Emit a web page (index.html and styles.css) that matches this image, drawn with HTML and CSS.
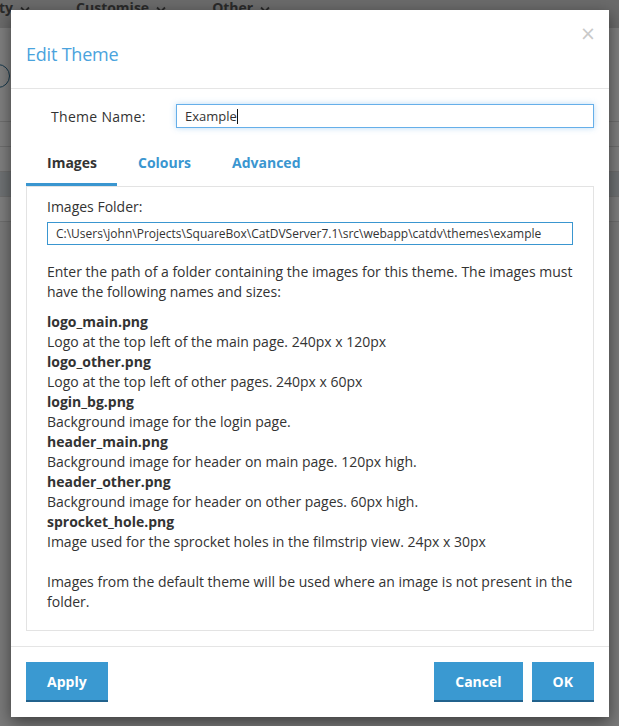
FILE: index.html
```html
<!DOCTYPE html>
<html>
<head>
<meta charset="utf-8">
<link rel="stylesheet" href="styles.css">
</head>
<body>
<div class="page">
  <div class="topnav">
    <span class="nav-item first">ty<svg class="chev" width="10" height="7" viewBox="0 0 10 7"><path d="M1 1.5 L5 5.5 L9 1.5" fill="none" stroke="currentColor" stroke-width="1.8"/></svg></span>
    <span class="nav-item">Customise<svg class="chev" width="10" height="7" viewBox="0 0 10 7"><path d="M1 1.5 L5 5.5 L9 1.5" fill="none" stroke="currentColor" stroke-width="1.8"/></svg></span>
    <span class="nav-item">Other<svg class="chev" width="10" height="7" viewBox="0 0 10 7"><path d="M1 1.5 L5 5.5 L9 1.5" fill="none" stroke="currentColor" stroke-width="1.8"/></svg></span>
  </div>
  <div class="subbar"><span class="pill"></span></div>
  <div class="rows">
    <div class="row"></div>
    <div class="row"></div>
    <div class="row sel"></div>
    <div class="row"></div>
  </div>
</div>
<div class="overlay"></div>
<div class="modal">
  <div class="modal-header">
    <h4 class="modal-title">Edit Theme</h4>
    <span class="close">&times;</span>
  </div>
  <div class="modal-body">
    <div class="form-row">
      <label class="form-label">Theme Name:</label>
      <div class="name-input">Example<span class="caret"></span></div>
    </div>
    <ul class="tabs">
      <li class="tab active">Images</li>
      <li class="tab">Colours</li>
      <li class="tab">Advanced</li>
    </ul>
    <div class="tab-panel">
      <div class="field-label">Images Folder:</div>
      <div class="folder-input">C:\Users\john\Projects\SquareBox\CatDVServer7.1\src\webapp\catdv\themes\example</div>
      <p class="intro">Enter the path of a folder containing the images for this theme. The images must have the following names and sizes:</p>
      <dl class="files">
        <dt>logo_main.png</dt><dd>Logo at the top left of the main page. 240px x 120px</dd>
        <dt>logo_other.png</dt><dd>Logo at the top left of other pages. 240px x 60px</dd>
        <dt>login_bg.png</dt><dd>Background image for the login page.</dd>
        <dt>header_main.png</dt><dd>Background image for header on main page. 120px high.</dd>
        <dt>header_other.png</dt><dd>Background image for header on other pages. 60px high.</dd>
        <dt>sprocket_hole.png</dt><dd>Image used for the sprocket holes in the filmstrip view. 24px x 30px</dd>
      </dl>
      <p class="note">Images from the default theme will be used where an image is not present in the folder.</p>
    </div>
  </div>
  <div class="modal-footer">
    <button class="btn">Apply</button>
    <div class="right-btns">
      <button class="btn">Cancel</button>
      <button class="btn">OK</button>
    </div>
  </div>
</div>
</body>
</html>
```
FILE: styles.css
```css
html, body {
  margin: 0;
  padding: 0;
}
body {
  width: 619px;
  height: 726px;
  overflow: hidden;
  font-family: "Open Sans", "Noto Sans", sans-serif;
  background: #f4f4f4;
  position: relative;
}
.page {
  height: 726px;
}
.topnav {
  height: 28px;
  box-sizing: border-box;
  background: #d6d6d6;
  display: flex;
  align-items: flex-start;
  padding-top: 0;
  font-weight: 700;
  font-size: 14px;
  color: #555;
  line-height: 18px;
  overflow: hidden;
}
.nav-item {
  display: flex;
  align-items: center;
  margin-right: 46px;
  white-space: nowrap;
  margin-top: -1px;
}
.nav-item.first {
  margin-left: -1px;
}
.chev {
  display: block;
  margin-left: 7px;
  margin-top: 2px;
}
.subbar {
  height: 93px;
  background: #fff;
  border-bottom: 1px solid #ddd;
  position: relative;
  overflow: hidden;
}
.pill {
  display: block;
  margin-top: 36px;
  margin-left: -60px;
  width: 68px;
  height: 22px;
  border: 1px solid #2c6f96;
  border-radius: 12px;
}
.rows .row {
  height: 24px;
  border-bottom: 1px solid #ddd;
  background: #fff;
}
.rows .row.sel {
  background: #dfe5e9;
}
.overlay {
  position: absolute;
  inset: 0;
  background: rgba(0, 0, 0, 0.5);
}
.modal {
  position: absolute;
  top: 10px;
  left: 11px;
  width: 598px;
  background: #fff;
  box-shadow: 0 5px 15px rgba(0, 0, 0, 0.5);
  color: #333;
}
.modal-header {
  position: relative;
  padding: 30px 15px 20px 15px;
  border-bottom: 1px solid #e5e5e5;
}
.modal-title {
  margin: 0;
  font-size: 18px;
  font-weight: 400;
  line-height: 28px;
  color: #4aa3dd;
  letter-spacing: -0.2px;
}
.close {
  position: absolute;
  top: 13px;
  right: 13px;
  font-size: 19px;
  line-height: 20px;
  color: #c9c9c9;
  font-family: "DejaVu Sans", sans-serif;
}
.modal-body {
  padding: 15px 15px 15px 15px;
}
.form-row {
  display: flex;
  align-items: center;
  height: 24px;
}
.form-label {
  width: 150px;
  padding-left: 25px;
  box-sizing: border-box;
  font-size: 14px;
  color: #333;
  letter-spacing: 0.3px;
}
.name-input {
  flex: 1;
  height: 24px;
  box-sizing: border-box;
  border: 1px solid #66afe9;
  box-shadow: 0 0 6px rgba(102, 175, 233, 0.45);
  font-size: 13px;
  line-height: 22px;
  padding-left: 8px;
  color: #333;
}
.caret {
  display: inline-block;
  width: 1px;
  height: 15px;
  background: #111;
  vertical-align: -3px;
}
.tabs {
  list-style: none;
  margin: 15px 0 0 0;
  padding: 0;
  display: flex;
}
.tab {
  padding: 10px 20px 10px 21px;
  font-size: 14px;
  font-weight: 700;
  line-height: 20px;
  color: #3a96d0;
  border-bottom: 3px solid transparent;
}
.tab.active {
  color: #333;
  border-bottom-color: #3a96d0;
}
.tab-panel {
  border: 1px solid #e3e3e3;
  padding: 10px 20px 9px 20px;
  font-size: 14px;
  line-height: 20px;
  color: #333;
}
.field-label {
  margin-bottom: 5px;
}
.folder-input {
  height: 23px;
  box-sizing: border-box;
  border: 1px solid #3a96d0;
  font-size: 12px;
  line-height: 21px;
  padding-left: 8px;
  white-space: nowrap;
  overflow: hidden;
}
.intro {
  margin: 17px 0 10px 0;
}
.files {
  margin: 0 0 20px 0;
}
.files dt {
  font-weight: 700;
}
.files dd {
  margin: 0;
}
.note {
  margin: 0 0 9px 0;
}
.modal-footer {
  border-top: 1px solid #e5e5e5;
  padding: 15px;
  display: flex;
  justify-content: space-between;
}
.right-btns {
  display: flex;
  gap: 9px;
}
.btn {
  font-family: "Open Sans", "Noto Sans", sans-serif;
  font-size: 14px;
  font-weight: 700;
  color: #fff;
  background: #3a99d1;
  border: none;
  border-bottom: 2px solid #21628d;
  height: 40px;
  padding: 0 21px;
  margin: 0;
  border-radius: 0;
}
```
